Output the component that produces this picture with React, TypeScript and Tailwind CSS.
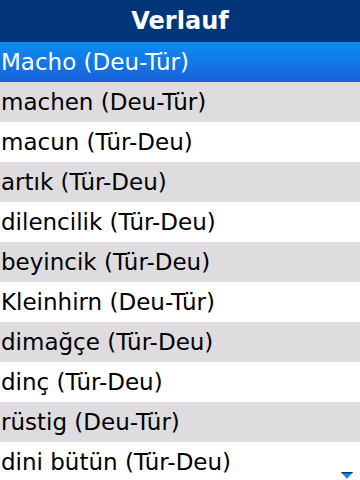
import React from "react";

const items = [
  "Macho (Deu-Tür)",
  "machen (Deu-Tür)",
  "macun (Tür-Deu)",
  "artık (Tür-Deu)",
  "dilencilik (Tür-Deu)",
  "beyincik (Tür-Deu)",
  "Kleinhirn (Deu-Tür)",
  "dimağçe (Tür-Deu)",
  "dinç (Tür-Deu)",
  "rüstig (Deu-Tür)",
  "dini bütün (Tür-Deu)",
];

export default function App() {
  return (
    <div
      className="relative w-[360px] h-[480px] overflow-hidden bg-white"
      style={{ fontFamily: '"DejaVu Sans", sans-serif' }}
    >
      <div className="h-[42px] bg-[#03357a] flex items-center justify-center text-white font-bold text-[24px] leading-none">
        Verlauf
      </div>
      {items.map((t, i) => (
        <div
          key={i}
          className={
            "h-[40px] flex items-center pl-[1px] text-[23px] leading-none " +
            (i === 0
              ? "bg-gradient-to-b from-[#0a8ef2] to-[#1961d9] text-white"
              : i % 2 === 1
              ? "bg-[#dedcdf] text-black"
              : "bg-white text-black")
          }
        >
          {t}
        </div>
      ))}
      <svg
        className="absolute left-[341px] top-[472px]"
        width="12"
        height="7"
        viewBox="0 0 12 7"
      >
        <polygon points="0,0 12,0 6,7" fill="#1e88e8" />
        <polygon points="0,0 12,0 11,1.5 1,1.5" fill="#0b3f7a" />
      </svg>
    </div>
  );
}
